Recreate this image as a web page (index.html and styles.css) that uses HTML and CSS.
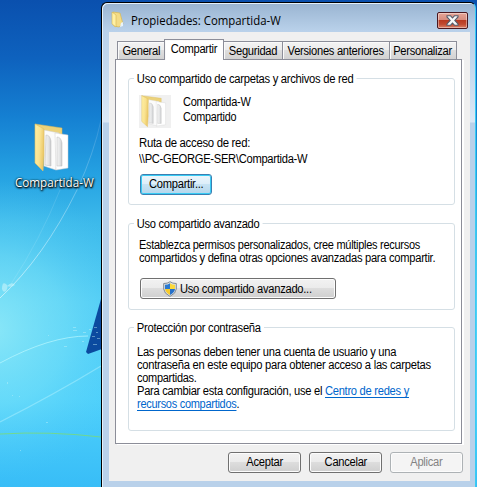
FILE: index.html
```html
<!DOCTYPE html>
<html lang="es">
<head>
<meta charset="utf-8">
<title>Propiedades: Compartida-W</title>
<link rel="stylesheet" href="styles.css">
</head>
<body>
<svg width="0" height="0" class="defs">
  <defs>
    <linearGradient id="gold" x1="0" x2="1" y1="0" y2=".3"><stop offset="0" stop-color="#fff0a2"/><stop offset=".6" stop-color="#f9e290"/><stop offset="1" stop-color="#ecc969"/></linearGradient>
    <linearGradient id="paper" x1="0" x2="1"><stop offset="0" stop-color="#f4f4f4"/><stop offset=".6" stop-color="#e2e3e4"/><stop offset="1" stop-color="#c9cbcd"/></linearGradient>
    <symbol id="folder" viewBox="0 0 36 50">
      <path d="M1 1 28 5 28 12 10 12Z" fill="#ecd27a" stroke="#d4b75c" stroke-width=".5"/>
      <path d="M10 7 25 10 22 47 10 43Z" fill="#fbfbfb" stroke="#d0d0d0" stroke-width=".5"/>
      <path d="M12 12Q16 12 17 18V43L11 42Z" fill="url(#paper)" stroke="#bbb" stroke-width=".5"/>
      <path d="M21 10 34 12 34 45 22 47Z" fill="#fff" stroke="#cfcfcf" stroke-width=".5"/>
      <path d="M23 14Q27 14 28 20V43L23 43Z" fill="url(#paper)" stroke="#bbb" stroke-width=".5"/>
      <path d="M1 1 10 6 10 32 9 48 1 40Z" fill="url(#gold)" stroke="#dfc164" stroke-width=".6"/>
    </symbol>
  </defs>
</svg>
<div class="desktop">
  <svg class="wallpaper" width="477" height="487" viewBox="0 0 477 487">
    <defs>
      <linearGradient id="sky" x1="0" x2="0" y1="0" y2="1">
        <stop offset="0" stop-color="#0a50ae"/><stop offset=".12" stop-color="#0e62be"/><stop offset=".24" stop-color="#1580d2"/><stop offset=".36" stop-color="#25a2e2"/><stop offset=".46" stop-color="#3dbaeb"/><stop offset=".62" stop-color="#52cdf5"/><stop offset=".82" stop-color="#4ed0fb"/><stop offset="1" stop-color="#38bdf7"/>
      </linearGradient>
      <radialGradient id="glow" gradientUnits="userSpaceOnUse" cx="-8" cy="330" r="150"><stop offset="0" stop-color="#98edf8" stop-opacity=".8"/><stop offset=".5" stop-color="#80e5f8" stop-opacity=".45"/><stop offset="1" stop-color="#50ccf8" stop-opacity="0"/></radialGradient>
      <linearGradient id="ray" gradientUnits="userSpaceOnUse" x1="0" x2="0" y1="120" y2="300"><stop offset="0" stop-color="#fff" stop-opacity=".1"/><stop offset="1" stop-color="#fff" stop-opacity=".55"/></linearGradient>
    </defs>
    <rect width="477" height="487" fill="url(#sky)"/>
    <rect width="477" height="487" fill="url(#glow)"/>
    <g fill="none">
      <path d="M0 298Q44 257 77 190 94 153 101 120" stroke="url(#ray)"/>
      <path d="M11 284Q40 240 60 190" stroke="#fff" stroke-opacity=".15" stroke-width=".8"/>
      <path d="M0 363Q50 336 88 336" stroke="#c6fbff" stroke-opacity=".6"/>
      <path d="M0 422Q55 394 101 366" stroke="#b8f4ff" stroke-opacity=".45" stroke-width="1.3"/>
      <path d="M0 434Q50 431 101 437" stroke="#7ddc6c" stroke-opacity=".75" stroke-width="1"/>
    </g>
    <path d="M101 299 86 352 88 354 102 349Z" fill="#0b4a9f"/>
    <g fill="#c9f5fb" opacity=".6"><path d="M2 289q0-8 4-5 3 2 0 7-3 2-4-2ZM7 286q5-5 8-1-4 3-8 1Z"/>
      <path opacity=".7" d="M73 327h3v1h-3zM73 330h4v1h-4zM83 332h3v1h-3zM89 329h2v1h-2zM82 341h2v1h-2zM64 346h3v1h-3zM92 336h3v1h-3zM97 338h3v1h-3zM94 327h3v1h-3zM96 332h2v1h-2zM93 344h4v1h-4zM7 382h1v2H7zM19 396h1v1h-1zM46 422h2v1h-2zM20 450h1v1h-1zM12 395h1v1h-1zM48 335h1v1h-1z"/></g>
  </svg>

  <div class="shortcut">
    <svg width="36" height="50"><use href="#folder"/></svg>
    <span>Compartida-W</span>
  </div>

  <main class="window">
    <header class="titlebar">
      <svg width="13" height="17" viewBox="0 0 13 17"><path d="M2 1 9 2 12 13 8 16 3 15Z" fill="#f4dc86" stroke="#d8b852" stroke-width=".7"/><path d="M1 1 5 4v12l-4-3Z" fill="#fff0a3" stroke="#d5b551" stroke-width=".6"/><path d="M10 12 12 11V15L9 16Z" fill="#e9f3fa"/></svg>
      <h1>Propiedades: Compartida-W</h1>
      <button class="close" aria-label="Cerrar"><svg width="13" height="11" viewBox="0 0 13 11"><path d="M1 .8H4.6L6.5 3 8.4.8H12V2L8.8 5.4 12 9v1.2H8.4L6.5 8 4.6 10.2H1V9L4.2 5.4 1 2Z" fill="#f7f7f7" stroke="#555c6b" stroke-width="1.1"/></svg></button>
    </header>
    <div class="client">
      <nav class="tabs">
        <a class="tab general"><span>General</span></a><a class="tab active"><span>Compartir</span></a><a class="tab seguridad"><span>Seguridad</span></a><a class="tab versiones"><span>Versiones anteriores</span></a><a class="tab personalizar"><span>Personalizar</span></a>
      </nav>
      <div class="panel">
        <section class="group network">
          <h2 class="w935">Uso compartido de carpetas y archivos de red</h2>
          <div class="share">
            <div class="thumb"><svg width="26" height="33" viewBox="0 0 36 50" preserveAspectRatio="none"><use href="#folder" width="36" height="50"/></svg></div>
            <div class="names"><p class="w915">Compartida-W</p><p class="w90">Compartido</p></div>
          </div>
          <p class="label w945">Ruta de acceso de red:</p>
          <p class="path w93">\\PC-GEORGE-SER\Compartida-W</p>
          <button class="btn focus"><span>Compartir...</span></button>
        </section>
        <section class="group advanced">
          <h2 class="w925">Uso compartido avanzado</h2>
          <p class="first w915">Establezca permisos personalizados, cree múltiples recursos</p>
          <p class="w93">compartidos y defina otras opciones avanzadas para compartir.</p>
          <button class="btn wide"><svg width="14" height="16" viewBox="0 0 14 16"><path d="M7 .7Q9.5 2.6 13.3 2.5V8Q13 12.5 7 15.4 1 12.5.7 8V2.5Q4.5 2.6 7 .7Z" fill="#dde2e5" stroke="#828b92"/><path d="M7 2.2V8H2V3.8Q5 3.7 7 2.2Z" fill="#2c7ad0"/><path d="M7 2.2V8h5V3.8Q9 3.7 7 2.2Z" fill="#fbd83a"/><path d="M2 8h5v5.9Q2.4 11.6 2 8Z" fill="#f7cb2d"/><path d="M12 8H7v5.9Q11.6 11.6 12 8Z" fill="#2670c9"/></svg><span>Uso compartido avanzado...</span></button>
        </section>
        <section class="group password">
          <h2 class="w935">Protección por contraseña</h2>
          <p class="first w93">Las personas deben tener una cuenta de usuario y una</p>
          <p class="w935">contraseña en este equipo para obtener acceso a las carpetas</p>
          <p class="w915">compartidas.</p>
          <p class="w93">Para cambiar esta configuración, use el <a>Centro de redes y</a></p>
          <p class="w915"><a>recursos compartidos</a>.</p>
        </section>
      </div>
      <footer class="actions">
        <button class="btn"><span>Aceptar</span></button><button class="btn"><span>Cancelar</span></button><button class="btn" disabled><span>Aplicar</span></button>
      </footer>
    </div>
  </main>
</div>
</body>
</html>
```

FILE: styles.css
```css
* { box-sizing: border-box; }
body { margin: 0; overflow: hidden; font: 12px/13px "Liberation Sans", Arial, sans-serif; letter-spacing: -.3px; color: #000; }
h1, h2, p { margin: 0; font-size: 12px; font-weight: 400; white-space: nowrap; }
button { font: inherit; letter-spacing: inherit; color: #000; padding: 0; }
svg { display: block; flex: none; }
.defs { position: absolute; }
.desktop { position: relative; width: 477px; height: 487px; overflow: hidden; display: flex; }
.wallpaper { position: absolute; left: 0; top: 0; }
.shortcut { position: relative; width: 101px; padding: 123px 0 0 15px; flex: none; }
.shortcut svg { margin-left: 19px; }
.shortcut span { display: block; width: max-content; margin-top: 2px; font: 12px/16px "Open Sans", "Noto Sans", sans-serif; letter-spacing: 0; color: #fff; white-space: nowrap; text-shadow: 0 1px 2px #000, 1px 1px 2px #000, 0 0 2px #033; transform: scaleX(.97); transform-origin: left; }

/* Condensed text widths */
.w90, .w915, .w925, .w93, .w935, .w945 { width: max-content; transform-origin: left; }
.w90 { transform: scaleX(.9); }
.w915 { transform: scaleX(.915); }
.w925 { transform: scaleX(.925); }
.w93 { transform: scaleX(.93); }
.w935 { transform: scaleX(.935); }
.w945 { transform: scaleX(.945); }
.tab span, .btn span { display: inline-block; transform: scaleX(.93); }

.window { position: relative; width: 375px; height: 492px; margin-top: 2px; flex: none; padding: 0 5px 0 7px; border: 1px solid #000; border-right-color: #37cdf3; border-radius: 6px 6px 0 0; background: linear-gradient(#99b4d1, #b9d1ea 28px, #c2d8ee 60px, #dbe8f6 119px, #b9d1ea 120px); box-shadow: inset 1px 1px #e4f1fb; }
.titlebar { height: 29px; display: flex; align-items: flex-start; padding-left: 2px; }
.titlebar > svg { margin-top: 8px; }
.titlebar h1 { margin: 9px 0 0 7px; font: 12px/17px "Open Sans", "Noto Sans", sans-serif; letter-spacing: 0; flex: 1; transform: scaleX(.95); transform-origin: left; }
.close { width: 31px; height: 17px; margin: 9px 2px 0 0; display: grid; place-items: center; border: 1px solid #4a1820; border-radius: 2px; background: linear-gradient(#e6a597, #d58b7d 48%, #b83a22 50%, #c04a31 75%, #da8068); box-shadow: inset 0 0 0 1px #ffffff66; }
.client { width: 361px; height: 449px; background: #f0f0f0; padding: 7px 8px 0 6px; }
.tabs { display: flex; align-items: flex-end; height: 20px; padding-left: 2px; }
.tab { height: 18px; line-height: 19px; display: flex; justify-content: center; white-space: nowrap; border: 1px solid #8c8e99; border-bottom: 0; margin-right: -1px; background: linear-gradient(#f3f3f3, #ececec 48%, #dedede 50%, #d2d2d2); box-shadow: inset 1px 1px #fafafa; }
.general { width: 48px; }
.seguridad { width: 60px; }
.versiones { width: 108px; }
.personalizar { width: 68px; }
.active { position: relative; width: 60px; height: 21px; margin-bottom: -1px; background: #fff; }
.panel { width: 347px; height: 385px; padding: 18px 6px 0 12px; border: 1px solid #8c8e99; background: #fff; box-shadow: 2px 1px #fff; }
.group { width: 327px; border: 1px solid #d5dfe5; border-radius: 3px; padding-left: 9px; }
.group h2 { margin: -6px 0 0 -4px; padding: 0 3px; background: #fff; }
.network { height: 127px; }
.share { display: flex; margin-top: 9px; padding-left: 1px; }
.thumb { width: 32px; height: 33px; background: #f0f0f0; padding-left: 2px; }
.names { margin-left: 12px; }
.names p { line-height: 15px; }
.label { margin: 9px 0 3px 1px; }
.path { margin-left: 1px; }
.btn { display: block; width: 73px; height: 21px; line-height: 19px; border: 1px solid #707070; border-radius: 3px; background: linear-gradient(#f2f2f2, #ebebeb 48%, #dddddd 50%, #cfcfcf); box-shadow: inset 0 0 0 1px #fcfcfc; }
.focus { width: 72px; margin: 8px 0 0 2px; border-color: #3c7fb1; background: linear-gradient(#edf6fb, #dceefa 48%, #c7e3f4 50%, #b5d7ec); box-shadow: inset 0 0 0 1px #38ccf5; }
.advanced { height: 87px; margin-top: 18px; }
.advanced p { margin-left: 1px; }
.advanced .first { margin-top: 8px; }
.wide { width: 196px; margin: 13px 0 0 2px; display: flex; align-items: center; padding-left: 22px; gap: 3px; }
.wide span { transform-origin: left; line-height: 20px; }
.password { height: 104px; margin-top: 17px; padding-left: 8px; }
.password h2 { margin-left: -3px; }
.password .first { margin-top: 11px; }
.password a { color: #0066cc; text-decoration: underline; text-underline-offset: 2px; }
.actions { display: flex; gap: 8px; padding: 8px 0 0 113px; width: 360px; }
.btn:disabled { color: #838383; border-color: #adb2b5; background: #f4f4f4; }
```
